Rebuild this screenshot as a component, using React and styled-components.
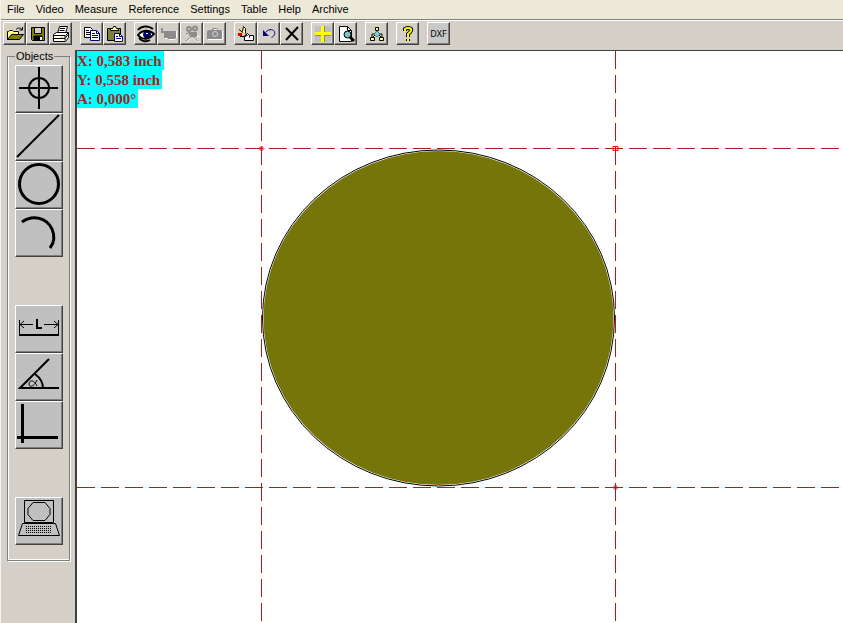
import React from "react";
import styled, { createGlobalStyle } from "styled-components";

const GlobalStyle = createGlobalStyle`
* {
  box-sizing: border-box;
}
body {
  margin: 0;
  overflow: hidden;
  background: #d4d0c8;
  font-family: "Liberation Sans", sans-serif;
}
`;

const Window = styled.div`
display: flex;
flex-direction: column;
height: 100vh;
border-left: 1px solid #f4f2ee;
color: #000;
`;

const MenuBar = styled.nav`
display: flex;
align-items: flex-start;
flex: none;
height: 19px;
padding: 0 1px;
background: #ece9d8;
`;

const MenuItem = styled.button`
border: 0;
padding: 0 5px;
margin-right: 1px;
background: none;
font: 11px/18px "Liberation Sans", sans-serif;
color: #000;
`;

const ToolBar = styled.div`
display: flex;
flex: none;
gap: 8px;
height: 31px;
padding: 2px 2px 0;
border-top: 1px solid #808080;
box-shadow: inset 0 1px #fff;
background: #d4d0c8;
`;

const ToolGroup = styled.div`
display: flex;
`;

const ToolButton = styled.button`
display: grid;
place-items: center;
width: 23px;
height: 23px;
padding: 0;
border: 1px solid;
border-color: #fff #404040 #404040 #fff;
box-shadow: inset -1px -1px #808080;
background: ${props => (props.$gray ? "#c8c8c8" : "#d4d0c8")};
font: 9px/16px "Noto Sans", sans-serif;
color: #000;
svg {
  display: block;
}
`;

const Main = styled.div`
display: flex;
flex: 1;
min-height: 0;
`;

const Sidebar = styled.aside`
flex: none;
width: 74px;
padding: 0 5px 0 6px;
`;

const Objects = styled.fieldset`
display: flex;
flex-direction: column;
gap: 48px;
margin: 0;
min-width: 0;
padding: 2px 0 15px 7px;
border: 1px solid #808080;
box-shadow: 1px 1px #fff, inset 1px 0 #fff, inset 0 -1px #fff;
legend {
  padding: 0 1px;
  font-size: 11px;
  line-height: 13px;
}
`;

const ObjectGroup = styled.div`
display: flex;
flex-direction: column;
`;

const ObjectButton = styled.button`
width: 48px;
height: 48px;
padding: 0;
border: 1px solid;
border-color: #fff #404040 #404040 #fff;
box-shadow: inset -1px -1px #808080;
background: #c0c0c0;
svg {
  display: block;
}
`;

const View = styled.main`
position: relative;
flex: 1;
min-width: 0;
border: solid #404040;
border-width: 1px 0 0 2px;
background: #fff;
overflow: hidden;
`;

const Drawing = styled.svg`
display: block;
width: 100%;
height: 100%;
`;

const Readout = styled.div`
position: absolute;
top: 0;
left: 0;
display: flex;
flex-direction: column;
align-items: flex-start;
font: bold 15px/17px "Liberation Serif", serif;
color: #a52424;
span {
  padding: 2px 2px 0 0;
  background: #0ff;
}
`;

const Icon = ({ children, size = 18 }) => (
  <svg width={size} height={size} viewBox={`0 0 ${size} ${size}`} fill="none" stroke="#000" aria-hidden="true">
    {children}
  </svg>
);

const OpenIcon = () => (
  <Icon>
    <path d="M1.5 14.5v-8h1l1-1h3l1 1h5v3" fill="#ffff80" />
    <path d="M1.5 14.5l4-5h12l-4 5z" fill="#808000" />
    <path d="M10 4.5c2-2 4-2 6 0M16.5 2v3h-3" />
  </Icon>
);

const SaveIcon = () => (
  <Icon>
    <path d="M2.5 2.5h13v13h-12l-1-1z" fill="#808000" />
    <path d="M5.5 2.5h7v6h-7z" fill="#d4d0c8" />
    <path d="M5 11h8v4H5z" fill="#000" />
    <path d="M11 12h2v3h-2z" fill="#fff" stroke="none" />
  </Icon>
);

const PrintIcon = () => (
  <Icon>
    <path d="M5.5 8.5l2-7h8l-2 7z" fill="#fff" />
    <path d="M8 3.5h5M7.5 5.5h5" />
    <path d="M1.5 9.5l3-2h12v5l-3 4h-12z" fill="#fff" />
    <path d="M2 10.5h11v5M2 13.5h11l3-4M13.5 10.5l3-3" />
    <path d="M8 12.5h3" stroke="#e0e000" />
  </Icon>
);

const CopyIcon = () => (
  <Icon>
    <path d="M1.5 2.5h6l2 2v8h-8z" fill="#fff" />
    <path d="M3 5.5h3M3 7.5h5M3 9.5h5" />
    <path d="M7.5 5.5h6l3 3v7h-9z" fill="#fff" stroke="#000080" />
    <path d="M13.5 5.5v3h3M9 8.5h3M9 10.5h6M9 12.5h6" stroke="#000080" />
  </Icon>
);

const PasteIcon = () => (
  <Icon>
    <path d="M1.5 3.5h13v12h-13z" fill="#808040" />
    <path d="M4.5 5.5v-2h2l1-2h2l1 2h2v2z" fill="#ffff80" />
    <path d="M8.5 8.5h5l3 3v5h-8z" fill="#fff" stroke="#000080" />
    <path d="M13.5 8.5v3h3M10 11.5h2M10 13.5h5" stroke="#000080" />
  </Icon>
);

const EyeIcon = () => (
  <Icon>
    <path d="M1 5c3-4 10-5 15-1" strokeWidth="2" />
    <path d="M1 10c4-5 11-6 16-1-4 5-10 6-14 3z" fill="#fff" strokeWidth="2" />
    <circle cx="10" cy="9.5" r="3.5" fill="#000080" />
    <path d="M9 8.5h2" stroke="#fff" />
    <path d="M2 13c3 4 8 4 11 2" strokeWidth="2" />
  </Icon>
);

const MonitorIcon = () => (
  <Icon>
    <path d="M5 13.5h2M9 14.5h6M16.5 6v7" stroke="#fff" />
    <path d="M1 3h2v3h13v7h-1v1H8v-1H4V8H1z" fill="#8c8c8c" stroke="none" />
  </Icon>
);

const MovieIcon = () => (
  <Icon>
    <path d="M4 17l4-4M10 13l6 4M14 11l3 1" stroke="#fff" />
    <g stroke="#8c8c8c">
      <circle cx="6" cy="4" r="2" strokeWidth="2" />
      <circle cx="12" cy="3.5" r="2" strokeWidth="2" />
      <path d="M5.5 7.5h8v4h-6zM3 8.5h2" fill="#8c8c8c" />
      <path d="M8 12l-5 4M10 12l5 4" />
    </g>
  </Icon>
);

const CameraIcon = () => (
  <Icon>
    <path d="M2 14.5h14.5V6" stroke="#fff" />
    <path d="M1 6l2-1h3l1-2h4l1 2h3l1 1v8H1z" fill="#8c8c8c" stroke="none" />
    <circle cx="9" cy="9" r="2.5" stroke="#d4d0c8" />
    <path d="M8 4.5h3" stroke="#fff" />
  </Icon>
);

const EraseIcon = () => (
  <Icon>
    <path d="M2 5l5 4" stroke="#f0d0a0" strokeWidth="4" />
    <path d="M1 9.5h4" stroke="#e00000" strokeWidth="3" />
    <path d="M2 4.5l4 3M5.5 6.5l1-5 2 2v5" fill="#ffff80" />
    <path d="M3 11.5h4l3-3" />
    <path d="M7.5 15.5v-4l3-3 2 2h4v5z" fill="#fff" />
    <path d="M7.5 11.5l3-1M12.5 10.5v2" />
  </Icon>
);

const UndoIcon = () => (
  <Icon>
    <path d="M5.5 7.5c2-3 7-4 9-1 1 3-1 5-3 6" stroke="#000080" />
    <path d="M3 5v6h6z" fill="#000080" stroke="none" />
  </Icon>
);

const DeleteIcon = () => (
  <Icon>
    <path d="M3 3l12 12M15 2L3 15" strokeWidth="2" />
  </Icon>
);

const CrossIcon = () => (
  <Icon>
    <path d="M1 1h16v16H1z" fill="#c0c0c0" stroke="none" />
    <path d="M9.5 1v16M1 9.5h16" stroke="#909050" strokeWidth="3" />
    <path d="M8.5 1v16M1 8.5h16" stroke="#ff0" strokeWidth="3" />
  </Icon>
);

const PreviewIcon = () => (
  <Icon>
    <path d="M2.5 1.5h8l4 4v11h-12z" fill="#fff" />
    <path d="M10.5 1.5v4h4" />
    <circle cx="10.5" cy="9.5" r="3.5" fill="#80c0c0" />
    <path d="M13 12l4 4" strokeWidth="3" />
  </Icon>
);

const TreeIcon = () => (
  <Icon>
    <path d="M9 5v4M4 13V9h10v4M5 12l4-4 4 4" />
    <path d="M7.5 2.5h3v3h-3z" fill="#ffff80" />
    <path d="M9 6l3 3-3 3-3-3z" fill="#80d0d0" stroke="#408080" />
    <path d="M2.5 12.5h4v3h-4zM11.5 12.5h4v3h-4z" fill="#ffff80" />
  </Icon>
);

const HelpIcon = () => (
  <Icon>
    <path d="M6 6V4q1-1 3-1t3 1q1 2-3 5v3M9 14v2" strokeWidth="4" />
    <path d="M6 6V4q1-1 3-1t3 1q1 2-3 5v3M9 14v2" stroke="#ff0" strokeWidth="2" />
  </Icon>
);

const toolGroups = [
  [["Open", OpenIcon], ["Save", SaveIcon], ["Print", PrintIcon]],
  [["Copy", CopyIcon], ["Paste", PasteIcon]],
  [["Live view", EyeIcon], ["Monitor", MonitorIcon], ["Record", MovieIcon], ["Capture", CameraIcon]],
  [["Erase", EraseIcon], ["Undo", UndoIcon], ["Delete", DeleteIcon]],
  [["Crosshair", CrossIcon], ["Preview", PreviewIcon]],
  [["Structure", TreeIcon]],
  [["Help", HelpIcon]],
];

const PointIcon = () => (
  <Icon size={46}>
    <path d="M23 1v42M3 22h39" strokeWidth="2" />
    <circle cx="23" cy="22" r="10" strokeWidth="2" />
  </Icon>
);

const LineIcon = () => (
  <Icon size={46}>
    <path d="M1 43L43 1" strokeWidth="2" />
  </Icon>
);

const CircleIcon = () => (
  <Icon size={46}>
    <circle cx="23" cy="22" r="19.5" strokeWidth="3" />
  </Icon>
);

const ArcIcon = () => (
  <Icon size={46}>
    <path d="M6 12C17 4 31 8 36 19c3 7 2 14-2 19" strokeWidth="3" />
  </Icon>
);

const LengthIcon = () => (
  <Icon size={46}>
    <path d="M3.5 14v16M42.5 14v16M4 18.5h13M28 18.5h14M8 15l-4 3.5L8 22M38 15l4 3.5-4 3.5" />
    <path d="M3 29h40" strokeWidth="2" />
    <path d="M21 13v9h5" strokeWidth="2" />
  </Icon>
);

const AngleIcon = () => (
  <Icon size={46}>
    <path d="M43 34H4L33 5" strokeWidth="2" />
    <path d="M19 20q8 6 8 14" strokeWidth="2" />
    <path d="M21 26c-3 7-8 8-8 4s5-5 8 2" />
  </Icon>
);

const CornerIcon = () => (
  <Icon size={46}>
    <path d="M6.5 2v39M1 35.5h41" strokeWidth="3" />
  </Icon>
);

const ComputerIcon = () => (
  <Icon size={46}>
    <path d="M8.5 2.5h29v22h-29zM6.5 25.5h33l4 12h-41z" />
    <path d="M17 4.5h12l5 6v6l-5 6H17l-5-6v-6z" />
    <path d="M10 28.5h26M10 30.5h26M10 32.5h26M10 34.5h26" strokeDasharray="1 1" />
  </Icon>
);

const objectGroups = [
  [["Point", PointIcon], ["Line", LineIcon], ["Circle", CircleIcon], ["Arc", ArcIcon]],
  [["Length", LengthIcon], ["Angle", AngleIcon], ["Corner", CornerIcon]],
  [["Computer", ComputerIcon]],
];

const menus = ["File", "Video", "Measure", "Reference", "Settings", "Table", "Help", "Archive"];

export default function App() {
  return (
    <Window>
      <GlobalStyle />
      <MenuBar>
        {menus.map(name => <MenuItem key={name}>{name}</MenuItem>)}
      </MenuBar>
      <ToolBar>
        {toolGroups.map((group, i) => (
          <ToolGroup key={i}>
            {group.map(([name, Glyph]) => (
              <ToolButton key={name} aria-label={name}><Glyph /></ToolButton>
            ))}
          </ToolGroup>
        ))}
        <ToolButton $gray>DXF</ToolButton>
      </ToolBar>
      <Main>
        <Sidebar>
          <Objects>
            <legend>Objects</legend>
            {objectGroups.map((group, i) => (
              <ObjectGroup key={i}>
                {group.map(([name, Glyph]) => (
                  <ObjectButton key={name} aria-label={name}><Glyph /></ObjectButton>
                ))}
              </ObjectGroup>
            ))}
          </Objects>
        </Sidebar>
        <View>
          <Drawing aria-label="Measured part">
            <defs>
              <pattern id="dash-x" width="24" height="8" patternUnits="userSpaceOnUse">
                <rect width="18" height="8" fill="#b01c1c" />
              </pattern>
              <pattern id="dash-y" width="8" height="24" patternUnits="userSpaceOnUse">
                <rect width="8" height="18" fill="#b01c1c" />
              </pattern>
            </defs>
            <ellipse cx="361.5" cy="267" rx="176" ry="168" fill="#fff" stroke="#000" />
            <ellipse cx="361.5" cy="267" rx="175" ry="167" fill="#75750a" />
            <rect y="97" width="100%" height="1" fill="url(#dash-x)" />
            <rect y="436" width="100%" height="1" fill="url(#dash-x)" />
            <rect x="184" width="1" height="100%" fill="url(#dash-y)" />
            <rect x="538" width="1" height="100%" fill="url(#dash-y)" />
            <g stroke="#d01818" fill="none">
              <path d="M184.5 95l2.5 2.5-2.5 2.5-2.5-2.5z" />
              <path d="M541 95.5h-5v4h5z" />
              <path d="M538.5 434l2.5 2.5-2.5 2.5-2.5-2.5z" />
            </g>
          </Drawing>
          <Readout>
            <span>X: 0,583 inch</span>
            <span>Y: 0,558 inch</span>
            <span>A: 0,000°</span>
          </Readout>
        </View>
      </Main>
    </Window>
  );
}
